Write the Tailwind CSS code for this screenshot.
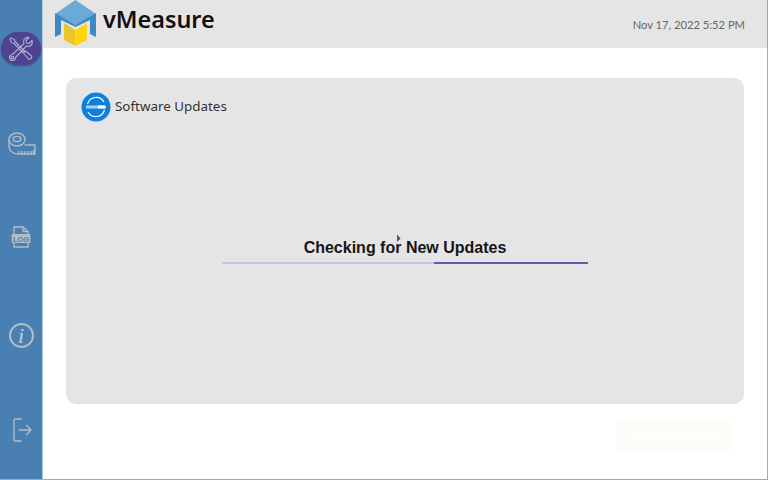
<!DOCTYPE html>
<html lang="en">
  <head>
    <meta charset="UTF-8" />
    <meta name="viewport" content="width=device-width, initial-scale=1.0" />
    <script src="https://cdn.jsdelivr.net/npm/@tailwindcss/browser@4"></script>
    <title>vMeasure</title>
  </head>
  <body class="bg-white">
    <div class="w-[768px] h-[480px] flex overflow-hidden border-r border-b border-[#a8a8a8]">
      <!-- sidebar -->
      <aside class="w-[43px] shrink-0 h-full bg-[#4a7fb2] border-r border-[#a9c6e2] flex flex-col items-center pt-[32px]">
        <div class="w-[40px] h-[33px] rounded-[17px] bg-[#4d4390] flex items-center justify-center ml-[-1px] shadow-[0_1px_2px_rgba(0,0,0,0.3)]">
          <svg class="w-[26px] h-[26px]" viewBox="0 0 26 26" fill="none" stroke="#b0adcc" stroke-width="1.1" stroke-linejoin="round">
            <path d="M3 2 L1.8 3.2 L3.5 6.5 L5.5 7 L15 16.5 L16.5 15 L7 5.5 L6.5 3.5 Z" />
            <path d="M15.5 17 L20 22.5 Q21.5 24 23 22.5 Q24.5 21 23 19.5 L17.5 15 Z" />
            <path d="M24 4.5 L21 7.5 L18.5 7 L18 4.5 L21 1.5 Q17.5 1 16 3.5 Q15 5.5 16 7.5 L4.5 18.5 Q1.5 18.5 1.5 21.5 Q1.5 24.5 4.5 24.5 Q7.5 24.5 7.5 21.5 L18.5 10 Q21 11 23 9.5 Q25 7.5 24 4.5 Z" />
            <circle cx="4.5" cy="21.5" r="1.3" />
          </svg>
        </div>
        <svg class="mt-[67px] w-[28px] h-[23px] ml-[1px]" viewBox="0 0 28 23" fill="none" stroke="#b4bcc6" stroke-width="1.4" stroke-linejoin="round">
          <ellipse cx="9" cy="7.5" rx="8" ry="6.5" />
          <ellipse cx="9" cy="7" rx="3.8" ry="2.6" />
          <path d="M1 8 V15 Q2 21 9 22 H27 V13 H16.5" />
          <path d="M11 22 V19 M14 22 V19 M17 22 V19 M20 22 V19 M23 22 V19 M25.5 22 V18" />
        </svg>
        <svg class="mt-[71px] w-[20px] h-[22px]" viewBox="0 0 20 22" fill="none" stroke="#b4bcc6" stroke-width="1.3">
          <path d="M3 8 V1 H12 L17 5.5 V8" />
          <path d="M12 1 V5.5 H17" />
          <path d="M3 17 V21 H17 V17" />
          <rect x="0.6" y="8" width="18.8" height="9" rx="1" fill="#b4bcc6" stroke="none" />
          <text x="10" y="15.6" text-anchor="middle" font-family="Liberation Sans, sans-serif" font-size="7.5" font-weight="700" fill="#4a7fb2" stroke="none">LOG</text>
        </svg>
        <div class="mt-[75px] w-[25px] h-[25px] rounded-full border-2 border-[#b4bcc6] flex items-center justify-center font-['Liberation_Serif',serif] italic text-[22px] leading-none text-[#c4ccd5]">i</div>
        <svg class="mt-[70px] w-[20px] h-[24px] ml-[3px]" viewBox="0 0 20 24" fill="none" stroke="#b4bcc6" stroke-width="1.4" stroke-linecap="round" stroke-linejoin="round">
          <path d="M8 1 H3 Q1 1 1 3 V21 Q1 23 3 23 H8" />
          <path d="M6 12 H18 M13.5 7.5 L18 12 L13.5 16.5" />
        </svg>
      </aside>
      <div class="flex-1 flex flex-col min-w-0">
        <!-- header -->
        <header class="h-[48px] shrink-0 bg-[#e5e5e5] flex items-center justify-between pl-[11px] pr-[22px] overflow-hidden">
          <div class="flex items-center gap-[6px] mt-[-3px]">
            <svg class="w-[43px] h-[46px]" viewBox="0 0 43 46" fill="none">
              <path d="M21.5 0 L42 14 L21.5 25 L1 14 Z" fill="#6aa9d8" />
              <path d="M1 13 L21.5 25 L42 13 V37 L36 34 V20 L21.5 27 L7 20 V34 L1 37 Z" fill="#3f88c5" />
              <path d="M10 23 L21.5 30 V46 L10 40 Z" fill="#eac52c" />
              <path d="M21.5 30 L33 23 V40 L21.5 46 Z" fill="#fdd60e" />
            </svg>
            <span class="font-['Noto_Sans',sans-serif] font-semibold text-[23.4px] leading-none text-[#111] mt-[-6px]">vMeasure</span>
          </div>
          <span class="font-['Lato',sans-serif] text-[11.2px] text-[#666] mt-[2px]">Nov 17, 2022 5:52 PM</span>
        </header>
        <!-- content -->
        <main class="flex-1 flex flex-col pt-[30px] pl-[23px] pr-[23px]">
          <section class="h-[326px] rounded-[10px] bg-[#e5e5e5] flex flex-col">
            <div class="flex items-center gap-[4px] pl-[15px] pt-[14px]">
              <svg class="w-[30px] h-[30px]" viewBox="0 0 30 30" fill="none">
                <circle cx="15" cy="15" r="14.5" fill="#0d80de" />
                <path d="M6.5 12 A9 9 0 0 1 23 10" stroke="#fff" stroke-width="1.2" />
                <path d="M23.5 18 A9 9 0 0 1 7 20" stroke="#fff" stroke-width="1.2" />
                <rect x="5" y="13.5" width="20" height="3" rx="0.5" fill="#a9d2f2" />
                <rect x="17" y="13.5" width="7" height="3" rx="0.5" fill="#fff" />
              </svg>
              <span class="font-['Noto_Sans',sans-serif] text-[13.4px] text-[#333] mt-[-2px]">Software Updates</span>
            </div>
            <div class="w-[366px] ml-[156px] mt-[114px] flex flex-col items-center">
              <h2 class="relative font-['Liberation_Sans',sans-serif] font-bold text-[16px] leading-[24px] text-[#161616]">Checking for New Updates<span class="absolute left-[93px] top-[-2px] w-[4px] h-[8px] bg-[#555] [clip-path:polygon(0_0,100%_60%,0_100%)]"></span></h2>
              <div class="w-full h-[2px] mt-[2px] bg-[#c5c3e4] flex justify-end">
                <div class="w-[154px] h-full bg-[#5a5fb0]"></div>
              </div>
            </div>
          </section>
          <div class="flex justify-end mt-[16px] pr-[11px]">
            <button class="w-[116px] h-[33px] rounded-[4px] bg-[#fdfdf8] font-['Roboto',sans-serif] font-medium text-[15px] tracking-[0.6px] text-[#fefefe]">DOWNLOAD</button>
          </div>
        </main>
      </div>
    </div>
  </body>
</html>
